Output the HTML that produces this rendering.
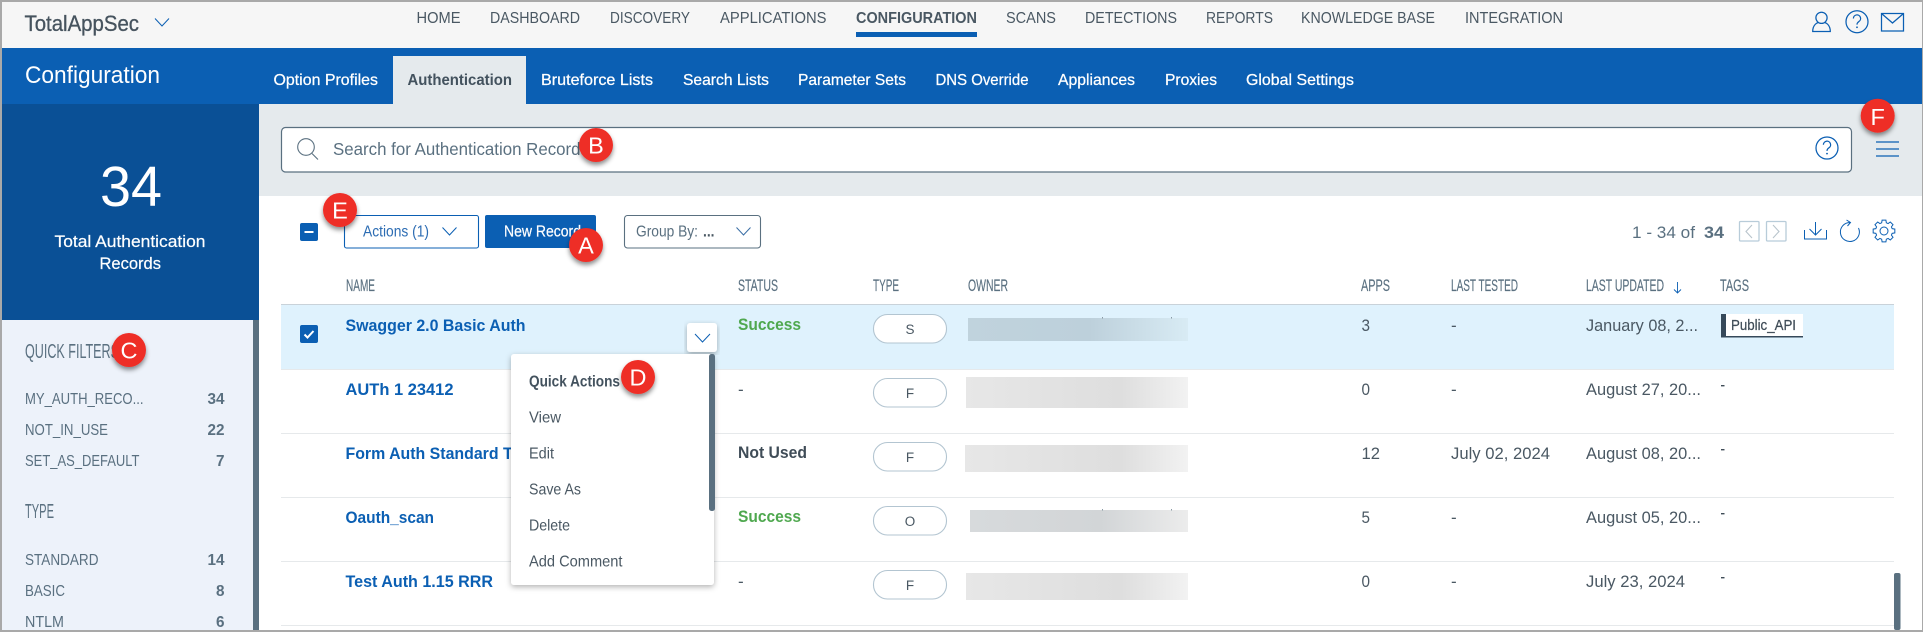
<!DOCTYPE html>
<html lang="en"><head><meta charset="utf-8"><title>TotalAppSec Configuration</title>
<style>
html,body{margin:0;padding:0;width:1923px;height:632px;overflow:hidden;background:#fff}
svg{display:block}
text{font-family:"Liberation Sans",sans-serif;white-space:pre}
.nav{font-size:15.800px;fill:#4a5863}
.tab{font-size:16px;fill:#fff;stroke:#fff;stroke-width:.25px}
.side{font-size:15.500px;fill:#5a7080}
.cnt{font-size:15.500px;font-weight:700;fill:#5a7080}
.sh{font-size:20px;fill:#5a7080}
.th{font-size:16.500px;fill:#5a7080;stroke:#5a7080;stroke-width:.15px}
.name{font-size:17px;font-weight:700;fill:#0b5fb3}
.td{font-size:17px;fill:#4a5863}
.mi{font-size:16px;fill:#4a5863}
.badge{font-size:23.500px;fill:#fff;text-anchor:middle}
.ic{fill:none;stroke:#0b5fb3;stroke-width:1.250}
.ch{fill:none;stroke:#0b5fb3;stroke-width:1}
</style></head><body>
<svg width="1923" height="632" viewBox="0 0 1923 632" xmlns="http://www.w3.org/2000/svg">
<defs>
<filter id="bs" x="-50%" y="-50%" width="200%" height="220%"><feDropShadow dx="0" dy="3" stdDeviation="2.500" flood-color="#000" flood-opacity=".45"/></filter>
<filter id="ms" x="-10%" y="-10%" width="120%" height="120%"><feDropShadow dx="0" dy="2" stdDeviation="3" flood-color="#000" flood-opacity=".3"/></filter>
<linearGradient id="o1"><stop offset="0" stop-color="#c0d3dd"/><stop offset=".55" stop-color="#bdd0db"/><stop offset="1" stop-color="#d8ebf4"/></linearGradient>
<linearGradient id="o2"><stop offset="0" stop-color="#e7e7e7"/><stop offset=".7" stop-color="#dedede"/><stop offset="1" stop-color="#f2f2f2"/></linearGradient>
<linearGradient id="o4"><stop offset="0" stop-color="#d7dadc"/><stop offset=".6" stop-color="#d2d5d7"/><stop offset="1" stop-color="#ececec"/></linearGradient>
<g id="help"><circle r="11" class="ic"/><path class="ic" d="M-3.600-3.200a3.600 3.600 0 1 1 5.400 3.100C.5.8 0 1.300 0 2.900"/><circle cy="5.600" r=".9" fill="#0b5fb3"/></g>
</defs>

<!-- frame and page -->
<rect width="1923" height="632" fill="#a9a9a9"/>
<rect x="2" y="2" width="1920" height="628" fill="#fff"/>

<!-- top bar -->
<rect x="2" y="2" width="1920" height="46" fill="#f6f6f6"/>
<text x="24.500" y="31" font-size="22" fill="#46535e" stroke="#46535e" stroke-width=".3" textLength="114.500" lengthAdjust="spacingAndGlyphs">TotalAppSec</text>
<path d="M155 18.500l7 7.500 7-7.500" class="ch"/>
<text class="nav" x="416.500" y="23" textLength="44" lengthAdjust="spacingAndGlyphs">HOME</text>
<text class="nav" x="490" y="23" textLength="90" lengthAdjust="spacingAndGlyphs">DASHBOARD</text>
<text class="nav" x="610" y="23" textLength="80" lengthAdjust="spacingAndGlyphs">DISCOVERY</text>
<text class="nav" x="720" y="23" textLength="106.500" lengthAdjust="spacingAndGlyphs">APPLICATIONS</text>
<text class="nav" x="856" y="23" font-weight="700" textLength="121" lengthAdjust="spacingAndGlyphs">CONFIGURATION</text>
<rect x="856" y="32" width="121" height="5" fill="#0b5fb3"/>
<text class="nav" x="1006" y="23" textLength="50" lengthAdjust="spacingAndGlyphs">SCANS</text>
<text class="nav" x="1085" y="23" textLength="92" lengthAdjust="spacingAndGlyphs">DETECTIONS</text>
<text class="nav" x="1206" y="23" textLength="67" lengthAdjust="spacingAndGlyphs">REPORTS</text>
<text class="nav" x="1301" y="23" textLength="134" lengthAdjust="spacingAndGlyphs">KNOWLEDGE BASE</text>
<text class="nav" x="1465" y="23" textLength="98" lengthAdjust="spacingAndGlyphs">INTEGRATION</text>
<!-- user, help, mail -->
<path class="ic" d="M1812.700 31.500c0-6 3.500-9.500 8.800-9.500s8.800 3.500 8.800 9.500z"/><circle class="ic" cx="1821.500" cy="17.800" r="5.600" style="fill:#f6f6f6"/>
<use href="#help" x="1857" y="21.700"/>
<path class="ic" d="M1881.500 13.500h22v17.500h-22zM1881.500 13.500l11 9.500 11-9.500"/>

<!-- blue bar -->
<rect x="2" y="48" width="1920" height="56" fill="#0b5fb3"/>
<text x="25" y="83" font-size="24" fill="#fff" textLength="135" lengthAdjust="spacingAndGlyphs">Configuration</text>
<rect x="393" y="56" width="133" height="48" fill="#e5eaed"/>
<text class="tab" x="273.500" y="85" textLength="104.500" lengthAdjust="spacingAndGlyphs">Option Profiles</text>
<text x="407.500" y="85" font-size="16" font-weight="700" fill="#43525e" textLength="104.500" lengthAdjust="spacingAndGlyphs">Authentication</text>
<text class="tab" x="541" y="85" textLength="112" lengthAdjust="spacingAndGlyphs">Bruteforce Lists</text>
<text class="tab" x="683" y="85" textLength="86" lengthAdjust="spacingAndGlyphs">Search Lists</text>
<text class="tab" x="798" y="85" textLength="108" lengthAdjust="spacingAndGlyphs">Parameter Sets</text>
<text class="tab" x="935.500" y="85" textLength="93" lengthAdjust="spacingAndGlyphs">DNS Override</text>
<text class="tab" x="1058" y="85" textLength="77" lengthAdjust="spacingAndGlyphs">Appliances</text>
<text class="tab" x="1165" y="85" textLength="52" lengthAdjust="spacingAndGlyphs">Proxies</text>
<text class="tab" x="1246" y="85" textLength="108" lengthAdjust="spacingAndGlyphs">Global Settings</text>

<!-- sidebar -->
<rect x="2" y="104" width="257" height="216" fill="#0a5096"/>
<rect x="2" y="320" width="251" height="310" fill="#edf2fa"/>
<rect x="253" y="320" width="6" height="310" fill="#5a7080"/>
<text x="100" y="206" font-size="57" fill="#fff" textLength="62" lengthAdjust="spacingAndGlyphs">34</text>
<text x="54.500" y="247" font-size="17" fill="#fff" stroke="#fff" stroke-width=".2" textLength="151" lengthAdjust="spacingAndGlyphs">Total Authentication</text>
<text x="99.500" y="269" font-size="17" fill="#fff" stroke="#fff" stroke-width=".2" textLength="61.500" lengthAdjust="spacingAndGlyphs">Records</text>
<text class="sh" x="25" y="358" textLength="94" lengthAdjust="spacingAndGlyphs">QUICK FILTERS</text>
<text class="side" x="25" y="404" textLength="118.500" lengthAdjust="spacingAndGlyphs">MY_AUTH_RECO...</text>
<text class="cnt" x="207.500" y="404" textLength="17" lengthAdjust="spacingAndGlyphs">34</text>
<text class="side" x="25" y="435" textLength="83" lengthAdjust="spacingAndGlyphs">NOT_IN_USE</text>
<text class="cnt" x="207.500" y="435" textLength="17" lengthAdjust="spacingAndGlyphs">22</text>
<text class="side" x="25" y="466" textLength="114.500" lengthAdjust="spacingAndGlyphs">SET_AS_DEFAULT</text>
<text class="cnt" x="216" y="466" textLength="8.500" lengthAdjust="spacingAndGlyphs">7</text>
<text class="sh" x="25" y="518" textLength="29" lengthAdjust="spacingAndGlyphs">TYPE</text>
<text class="side" x="25" y="565" textLength="73.500" lengthAdjust="spacingAndGlyphs">STANDARD</text>
<text class="cnt" x="207.500" y="565" textLength="17" lengthAdjust="spacingAndGlyphs">14</text>
<text class="side" x="25" y="596" textLength="40" lengthAdjust="spacingAndGlyphs">BASIC</text>
<text class="cnt" x="216" y="596" textLength="8.500" lengthAdjust="spacingAndGlyphs">8</text>
<text class="side" x="25" y="627" textLength="39" lengthAdjust="spacingAndGlyphs">NTLM</text>
<text class="cnt" x="216" y="627" textLength="8.500" lengthAdjust="spacingAndGlyphs">6</text>

<!-- search band -->
<rect x="259" y="104" width="1663" height="92" fill="#e5eaed"/>
<rect x="281.500" y="127.500" width="1570" height="44.500" rx="4" fill="#fff" stroke="#5a7080" stroke-width="1.200"/>
<circle cx="306" cy="147" r="8.300" fill="none" stroke="#5a7080" stroke-width="1.100"/><path d="M312 153.500l6 6" stroke="#5a7080" stroke-width="1.100"/>
<text x="333" y="155" font-size="17.500" fill="#5a7080" textLength="256" lengthAdjust="spacingAndGlyphs">Search for Authentication Records</text>
<use href="#help" x="1827" y="148"/>
<path d="M1876 142h23M1876 149h23M1876 156h23" class="ic"/>

<!-- toolbar -->
<rect x="300" y="223" width="18" height="18" rx="2" fill="#0b5fb3"/><rect x="304.500" y="231" width="9" height="2" fill="#fff"/>
<rect x="344.500" y="215.500" width="134" height="32.500" rx="2" fill="#fff" stroke="#0b5fb3" stroke-width="1.100"/>
<text x="363" y="236.500" font-size="15.500" fill="#2c6cb3" textLength="66" lengthAdjust="spacingAndGlyphs">Actions (1)</text>
<path class="ch" d="M442.500 227.500l7 7.500 7-7.500"/>
<rect x="485" y="215" width="111" height="33" rx="2" fill="#0b5fb3"/>
<text x="504" y="236.500" font-size="15.500" fill="#fff" stroke="#fff" stroke-width=".2" textLength="77" lengthAdjust="spacingAndGlyphs">New Record</text>
<rect x="624.500" y="215.500" width="136" height="32.500" rx="3" fill="#fff" stroke="#5a7080" stroke-width="1.100"/>
<text x="636" y="236.500" font-size="15.500" fill="#5a7080" textLength="62" lengthAdjust="spacingAndGlyphs">Group By:</text>
<text x="703" y="236.500" font-size="15.500" font-weight="700" fill="#4a5863" textLength="11.500" lengthAdjust="spacingAndGlyphs">...</text>
<path class="ch" d="M736.500 227.500l7 7.500 7-7.500" style="stroke:#3a6ea5"/>
<!-- pagination -->
<text x="1632" y="238" font-size="17" fill="#5a7080" textLength="63" lengthAdjust="spacingAndGlyphs">1 - 34 of</text>
<text x="1704" y="238" font-size="17" font-weight="700" fill="#5a7080" textLength="20" lengthAdjust="spacingAndGlyphs">34</text>
<rect x="1739.500" y="221.500" width="19.500" height="19.500" rx="1" fill="none" stroke="#b8ccd9" stroke-width="1.300"/>
<rect x="1766.500" y="221.500" width="19.500" height="19.500" rx="1" fill="none" stroke="#b8ccd9" stroke-width="1.300"/>
<path d="M1752 225l-6 6.500 6 6.500M1773 225l6 6.500-6 6.500" fill="none" stroke="#b8c4cc" stroke-width="1.100"/>
<path class="ch" d="M1804.500 230v9h22v-9M1815.500 222v13M1809.500 229l6 6 6-6"/>
<path class="ch" d="M1850 222.500a9.500 9.500 0 1 0 8.500 5.500M1846.500 220l4 2.500-3 3.500"/>
<g transform="translate(1884 231)"><path class="ch" d="M10.830-1.910L10.830 1.910L8.170 2.340L7.430 4.120L9.010 6.310L6.310 9.010L4.120 7.430L2.340 8.170L1.910 10.830L-1.910 10.830L-2.340 8.170L-4.120 7.430L-6.310 9.010L-9.010 6.310L-7.430 4.120L-8.170 2.340L-10.830 1.910L-10.830-1.910L-8.170-2.340L-7.430-4.120L-9.010-6.310L-6.310-9.010L-4.120-7.430L-2.340-8.170L-1.910-10.830L1.910-10.830L2.340-8.170L4.120-7.430L6.310-9.010L9.010-6.310L7.430-4.120L8.170-2.340Z"/><circle class="ch" r="4"/></g>

<!-- table head -->
<text class="th" x="346" y="291" textLength="29" lengthAdjust="spacingAndGlyphs">NAME</text>
<text class="th" x="738" y="291" textLength="40" lengthAdjust="spacingAndGlyphs">STATUS</text>
<text class="th" x="873" y="291" textLength="26" lengthAdjust="spacingAndGlyphs">TYPE</text>
<text class="th" x="968" y="291" textLength="40" lengthAdjust="spacingAndGlyphs">OWNER</text>
<text class="th" x="1361" y="291" textLength="29" lengthAdjust="spacingAndGlyphs">APPS</text>
<text class="th" x="1451" y="291" textLength="67" lengthAdjust="spacingAndGlyphs">LAST TESTED</text>
<text class="th" x="1586" y="291" textLength="78" lengthAdjust="spacingAndGlyphs">LAST UPDATED</text>
<path d="M1677.500 282v11M1674 289.500l3.500 3.500 3.500-3.500" fill="none" stroke="#0b5fb3" stroke-width=".9"/>
<text class="th" x="1720" y="291" textLength="29" lengthAdjust="spacingAndGlyphs">TAGS</text>
<rect x="281" y="304" width="1613" height="1" fill="#c9d2d9"/>

<!-- rows -->
<rect x="281" y="305" width="1613" height="64" fill="#dff2fd"/>
<g fill="#e6e9eb"><rect x="281" y="369" width="1613" height="1"/><rect x="281" y="433" width="1613" height="1"/><rect x="281" y="497" width="1613" height="1"/><rect x="281" y="561" width="1613" height="1"/><rect x="281" y="625" width="1613" height="1"/></g>
<rect x="300" y="325" width="18" height="18" rx="2" fill="#0b5fb3"/><path d="M304.500 334.500l3 3 6-6.500" fill="none" stroke="#fff" stroke-width="2"/>

<text class="name" x="345.500" y="331" textLength="180" lengthAdjust="spacingAndGlyphs">Swagger 2.0 Basic Auth</text>
<text class="name" x="345.500" y="395" textLength="108" lengthAdjust="spacingAndGlyphs">AUTh 1 23412</text>
<text class="name" x="345.500" y="459" textLength="189" lengthAdjust="spacingAndGlyphs">Form Auth Standard Test</text>
<text class="name" x="345.500" y="523" textLength="88.500" lengthAdjust="spacingAndGlyphs">Oauth_scan</text>
<text class="name" x="345.500" y="587" textLength="147.500" lengthAdjust="spacingAndGlyphs">Test Auth 1.15 RRR</text>

<text x="738" y="330" font-size="17" font-weight="700" fill="#4fa84f" textLength="63" lengthAdjust="spacingAndGlyphs">Success</text>
<text class="td" x="738" y="395">-</text>
<text x="738" y="458" font-size="17" font-weight="700" fill="#3f4c57" textLength="69" lengthAdjust="spacingAndGlyphs">Not Used</text>
<text x="738" y="522" font-size="17" font-weight="700" fill="#4fa84f" textLength="63" lengthAdjust="spacingAndGlyphs">Success</text>
<text class="td" x="738" y="587">-</text>

<g fill="#fff" stroke="#b3c5d1" stroke-width="1.100">
<rect x="873.500" y="314.500" width="73" height="28.500" rx="14"/><rect x="873.500" y="378.500" width="73" height="28.500" rx="14"/><rect x="873.500" y="442.500" width="73" height="28.500" rx="14"/><rect x="873.500" y="506.500" width="73" height="28.500" rx="14"/><rect x="873.500" y="570.500" width="73" height="28.500" rx="14"/>
</g>
<g font-size="13.500" fill="#4a5863" text-anchor="middle">
<text x="910" y="334">S</text><text x="910" y="398">F</text><text x="910" y="462">F</text><text x="910" y="526">O</text><text x="910" y="590">F</text>
</g>

<rect x="968" y="318" width="220" height="23" fill="url(#o1)"/>
<rect x="966" y="377" width="222" height="31" fill="url(#o2)"/>
<rect x="965" y="445" width="223" height="27" fill="url(#o2)"/>
<rect x="970" y="510" width="218" height="22" fill="url(#o4)"/>
<rect x="966" y="573" width="222" height="27" fill="url(#o2)"/>
<g fill="#8a9aa5"><rect x="1102" y="317" width="1" height="1.500"/><rect x="1171" y="317" width="1" height="1.500"/><rect x="1102" y="509" width="1" height="1.500"/><rect x="1171" y="509" width="1" height="1.500"/></g>

<text class="td" x="1361.500" y="331" textLength="8.500" lengthAdjust="spacingAndGlyphs">3</text>
<text class="td" x="1361.500" y="395" textLength="8.500" lengthAdjust="spacingAndGlyphs">0</text>
<text class="td" x="1361.500" y="459" textLength="18.500" lengthAdjust="spacingAndGlyphs">12</text>
<text class="td" x="1361.500" y="523" textLength="8.500" lengthAdjust="spacingAndGlyphs">5</text>
<text class="td" x="1361.500" y="587" textLength="8.500" lengthAdjust="spacingAndGlyphs">0</text>

<text class="td" x="1451" y="331">-</text><text class="td" x="1451" y="395">-</text>
<text class="td" x="1451" y="459" textLength="99" lengthAdjust="spacingAndGlyphs">July 02, 2024</text>
<text class="td" x="1451" y="523">-</text><text class="td" x="1451" y="587">-</text>

<text class="td" x="1586" y="331" textLength="112" lengthAdjust="spacingAndGlyphs">January 08, 2...</text>
<text class="td" x="1586" y="395" textLength="115" lengthAdjust="spacingAndGlyphs">August 27, 20...</text>
<text class="td" x="1586" y="459" textLength="115" lengthAdjust="spacingAndGlyphs">August 08, 20...</text>
<text class="td" x="1586" y="523" textLength="115" lengthAdjust="spacingAndGlyphs">August 05, 20...</text>
<text class="td" x="1586" y="587" textLength="99" lengthAdjust="spacingAndGlyphs">July 23, 2024</text>

<rect x="1721" y="314" width="82" height="23" fill="#fff"/>
<rect x="1721" y="314" width="5" height="23" fill="#36495a"/><rect x="1721" y="336" width="82" height="1.500" fill="#36495a"/>
<text x="1731" y="330" font-size="15" fill="#3f4c57" stroke="#3f4c57" stroke-width=".25" textLength="65" lengthAdjust="spacingAndGlyphs">Public_API</text>
<g fill="#3f4c57"><rect x="1721" y="385" width="3.500" height="1.400"/><rect x="1721" y="449" width="3.500" height="1.400"/><rect x="1721" y="513" width="3.500" height="1.400"/><rect x="1721" y="577" width="3.500" height="1.400"/></g>
<rect x="1894" y="573" width="6.500" height="57" rx="2" fill="#5a7080"/>

<!-- row action + menu -->
<rect x="687" y="323" width="30" height="29" rx="3" fill="#fff" filter="url(#ms)"/>
<path class="ch" d="M695 334l7.500 8 7.500-8"/>
<rect x="511" y="354" width="203" height="231" rx="3" fill="#fff" filter="url(#ms)"/>
<rect x="709" y="354" width="6" height="157" rx="2.500" fill="#5a7080"/>
<text x="529" y="386.500" font-size="16" font-weight="700" fill="#43525e" textLength="91" lengthAdjust="spacingAndGlyphs">Quick Actions</text>
<text class="mi" x="529" y="422.500" textLength="32" lengthAdjust="spacingAndGlyphs">View</text>
<text class="mi" x="529" y="458.500" textLength="25" lengthAdjust="spacingAndGlyphs">Edit</text>
<text class="mi" x="529" y="494.500" textLength="52" lengthAdjust="spacingAndGlyphs">Save As</text>
<text class="mi" x="529" y="530.500" textLength="41" lengthAdjust="spacingAndGlyphs">Delete</text>
<text class="mi" x="529" y="566.500" textLength="93.500" lengthAdjust="spacingAndGlyphs">Add Comment</text>

<!-- callout badges -->
<g fill="#ee2e27" filter="url(#bs)">
<circle cx="586" cy="245" r="17"/><circle cx="596" cy="145" r="17"/><circle cx="129" cy="350" r="17"/><circle cx="638" cy="377" r="17"/><circle cx="340" cy="210" r="17"/><circle cx="1877.700" cy="115.700" r="17"/>
</g>
<text class="badge" x="586" y="253.500">A</text>
<text class="badge" x="596" y="153.500">B</text>
<text class="badge" x="129" y="358.500">C</text>
<text class="badge" x="638" y="385.500">D</text>
<text class="badge" x="340" y="218.500">E</text>
<text class="badge" x="1877.700" y="125">F</text>
</svg>
</body></html>
